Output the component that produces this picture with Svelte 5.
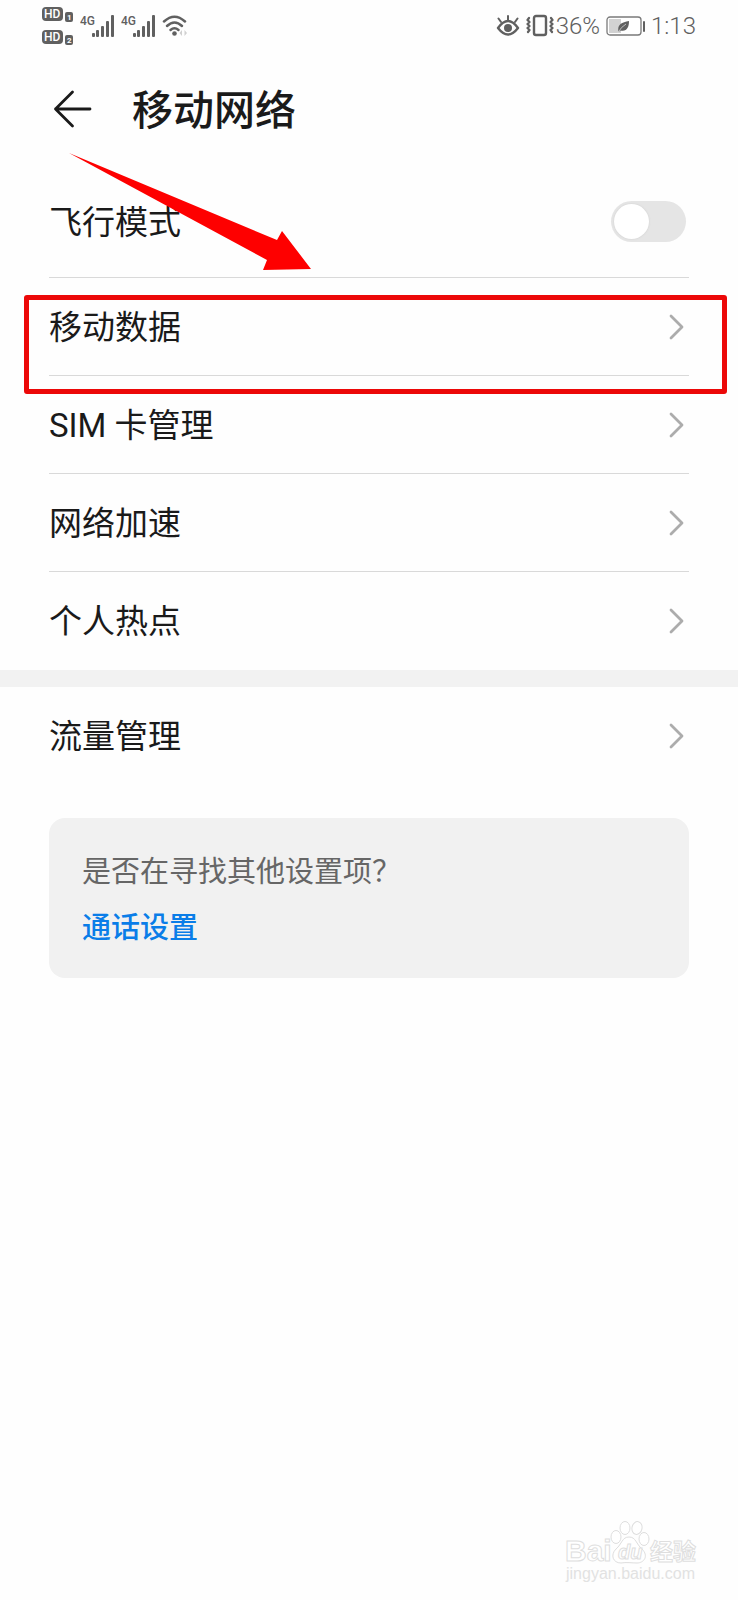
<script>
  let airplane = $state(false);
  const links = ['移动数据', 'SIM 卡管理', '网络加速', '个人热点'];
</script>

{#snippet chevron()}
  <svg class="chevron" width="18" height="28" viewBox="0 0 18 28" aria-hidden="true">
    <path d="M3 3 L14 14 L3 25" fill="none" stroke="#acacac" stroke-width="2.8" stroke-linecap="round" stroke-linejoin="round" />
  </svg>
{/snippet}

{#snippet signal()}
  <svg width="35" height="24" viewBox="0 0 35 24" aria-hidden="true">
    <text class="net" x="0" y="11">4G</text>
    <g fill="#606060">
      <rect x="12" y="19" width="3" height="4" rx="1" />
      <rect x="16" y="16" width="3" height="7" rx="1" />
      <rect x="21" y="12" width="3" height="11" rx="1" />
      <rect x="26" y="7" width="3" height="16" rx="1" />
      <rect x="31" y="1" width="3" height="22" rx="1" />
    </g>
  </svg>
{/snippet}

<div class="page">
  <div class="status">
    <div class="group">
      <svg width="32" height="40" viewBox="0 0 32 40" aria-hidden="true">
        <g fill="#606060">
          <rect x="0" y="1" width="21" height="14" rx="4" />
          <rect x="23" y="6" width="8" height="10" rx="2" />
          <rect x="0" y="24" width="21" height="14" rx="4" />
          <rect x="23" y="29" width="8" height="10" rx="2" />
        </g>
        <text class="hd" x="2" y="12">HD</text>
        <text class="num" x="25" y="14">1</text>
        <text class="hd" x="2" y="35">HD</text>
        <text class="num" x="25" y="37">2</text>
      </svg>
      {@render signal()}
      {@render signal()}
      <svg width="26" height="24" viewBox="0 0 26 24" aria-hidden="true">
        <g fill="none" stroke="#606060" stroke-width="2.5" stroke-linecap="round">
          <path d="M2 7.5 Q12.5 -2 23 7.5" />
          <path d="M5 12 Q12.5 5 20 12" />
          <path d="M8.5 16 Q12.5 12.5 16.5 16" />
        </g>
        <circle cx="12.500" cy="19.500" r="2.300" fill="#606060" />
        <path d="M20 16 L17.500 19 L20 22 Z M22.500 16 L25 19 L22.500 22 Z" fill="#d0d0d0" />
      </svg>
    </div>
    <div class="group">
      <svg width="24" height="24" viewBox="0 0 24 24" aria-hidden="true">
        <g fill="none" stroke="#606060" stroke-width="2.4" stroke-linecap="round">
          <path d="M2 14 Q12 0 22 14 Q12 27 2 14 Z" stroke-linejoin="round" />
          <path d="M12 6 V2 M5 8 L2.500 4.500 M19 8 L21.500 4.500" stroke-width="2" />
        </g>
        <circle cx="12" cy="14" r="4" fill="#606060" />
      </svg>
      <div class="pair">
        <svg width="28" height="24" viewBox="0 0 28 24" aria-hidden="true">
          <rect x="8" y="2" width="12" height="19" rx="2" fill="none" stroke="#606060" stroke-width="2.400" />
          <path d="M3 4 L1.500 6 L3.500 8 L1.500 10 L3.500 12 L1.500 14 L3.500 16 L2 18 M25 4 L26.500 6 L24.500 8 L26.500 10 L24.500 12 L26.500 14 L24.500 16 L26 18" fill="none" stroke="#606060" stroke-width="2.200" stroke-linejoin="round" stroke-linecap="round" />
        </svg>
        <span>36%</span>
      </div>
      <svg width="39" height="22" viewBox="0 0 39 22" aria-hidden="true">
        <rect x="1" y="2" width="34" height="18" rx="3" fill="#fff" stroke="#7a7a7a" stroke-width="1.300" />
        <rect x="3" y="4" width="12" height="14" fill="#d2d2d2" />
        <path d="M12.500 17 C11 9 16 7.500 23 6 C23 12 21 17 14.500 15.500 Z" fill="#606060" />
        <path d="M12 17.500 Q15 12 20 9" fill="none" stroke="#e6e6e6" stroke-width=".7" />
        <rect x="37" y="6" width="2" height="11" rx="1" fill="#606060" />
      </svg>
      <span>1:13</span>
    </div>
  </div>

  <header>
    <button class="back" aria-label="返回">
      <svg width="40" height="40" viewBox="0 0 40 40" aria-hidden="true">
        <path d="M19.500 3 L2.500 20 L19.500 37 M2.500 20 H37" fill="none" stroke="#1a1a1a" stroke-width="2.800" stroke-linecap="round" stroke-linejoin="round" />
      </svg>
    </button>
    <h1>移动网络</h1>
  </header>

  <main>
    <div class="list">
      <label class="row tall">
        <span>飞行模式</span>
        <input type="checkbox" role="switch" bind:checked={airplane} />
      </label>
      {#each links as text, i}
        <button class="row" class:marked={i === 0}>
          <span>{text}</span>
          {@render chevron()}
        </button>
      {/each}
    </div>
    <div class="list second">
      <button class="row">
        <span>流量管理</span>
        {@render chevron()}
      </button>
    </div>
    <section class="card">
      <p>是否在寻找其他设置项？</p>
      <a href="#call">通话设置</a>
    </section>
  </main>

  <svg class="pointer" width="250" height="126" viewBox="0 0 250 126" aria-hidden="true">
    <path d="M1 1 L209 88 L214 79 L243 117 L195 118 L199 108 Z" fill="#fe0000" />
  </svg>

  <footer>
    <svg width="136" height="68" viewBox="0 0 136 68" role="img" aria-label="Baidu 经验">
      <g fill="#fff" stroke="#dedede" stroke-width="1">
        <text class="logo" x="0" y="41">Bai</text>
        <ellipse cx="51" cy="17" rx="5" ry="6.500" />
        <ellipse cx="60" cy="8" rx="5" ry="6.500" />
        <ellipse cx="72" cy="8" rx="5" ry="6.500" transform="rotate(12 72 8)" />
        <ellipse cx="79" cy="19" rx="5" ry="6.500" />
        <path d="M64 17 C71 17 71 24 77 29 C84 36 79 43 72 43 C67 43 61 42 56 43 C48 43 45 35 51 29 C57 24 57 17 64 17 Z" />
        <text class="du" x="53" y="39">du</text>
        <text class="cn" x="85" y="40">经验</text>
      </g>
      <text class="site" x="1" y="59">jingyan.baidu.com</text>
    </svg>
  </footer>
</div>

<style>
  :global(body) {
    margin: 0;
    background: #fefefe;
  }
  .page {
    position: relative;
    display: flex;
    flex-direction: column;
    min-height: 100vh;
    box-sizing: border-box;
    color: #1a1a1a;
    font-family: Roboto, "Noto Sans CJK SC", sans-serif;
  }
  svg {
    display: block;
    flex: none;
  }
  .status {
    display: flex;
    justify-content: space-between;
    align-items: center;
    height: 52px;
    padding: 0 42px;
    color: #606060;
    font-size: 24px;
    font-weight: 300;
  }
  .group {
    display: flex;
    align-items: center;
    gap: 6px;
  }
  .pair {
    display: flex;
    align-items: center;
    gap: 2px;
  }
  .net {
    font: 500 12px Roboto, sans-serif;
    fill: #606060;
  }
  .hd {
    font: 500 12px Roboto, sans-serif;
    fill: #fff;
  }
  .num {
    font: 700 8px Roboto, sans-serif;
    fill: #fff;
  }
  header {
    display: flex;
    align-items: center;
    gap: 39px;
    height: 114px;
    padding: 0 53px;
  }
  button {
    border: 0;
    padding: 0;
    background: none;
    color: inherit;
    font: inherit;
    cursor: pointer;
  }
  h1 {
    margin: 0;
    padding-top: 4px;
    font-size: 41px;
    font-weight: 500;
    line-height: 56px;
  }
  .list {
    padding: 0 49px;
  }
  .row {
    position: relative;
    display: flex;
    align-items: center;
    justify-content: space-between;
    width: 100%;
    min-height: 98px;
    box-sizing: border-box;
    padding-right: 3px;
    border-bottom: 1px solid #d9d9d9;
    font-size: 33px;
    line-height: 48px;
    text-align: left;
  }
  .row span {
    padding-top: 3px;
  }
  .row.tall {
    min-height: 112px;
  }
  .row:last-child {
    border-bottom-color: transparent;
  }
  .second {
    border-top: 17px solid #f2f2f2;
  }
  .marked::after {
    content: "";
    position: absolute;
    inset: 17px -38px -19px -25px;
    border: 5px solid #ec0808;
    border-radius: 3px;
  }
  input {
    appearance: none;
    width: 75px;
    height: 41px;
    box-sizing: border-box;
    margin: 0;
    padding: 3px;
    border-radius: 21px;
    background: #e5e5e5;
  }
  input::before {
    content: "";
    display: block;
    width: 35px;
    height: 35px;
    border-radius: 50%;
    background: #fff;
    box-shadow: 0 0 2px #ccc;
  }
  input:checked {
    background: #0a7de8;
  }
  input:checked::before {
    margin-left: auto;
  }
  .card {
    display: flex;
    flex-direction: column;
    align-items: flex-start;
    margin: 33px 49px;
    padding: 26px 33px 22px;
    border-radius: 16px;
    background: #f1f1f1;
    font-size: 29px;
    line-height: 56px;
  }
  .card p {
    margin: 0;
    color: #666;
  }
  .card a {
    color: #0a7de8;
    font-weight: 500;
    text-decoration: none;
  }
  .pointer {
    position: absolute;
    left: 68px;
    top: 152px;
    pointer-events: none;
  }
  footer {
    display: flex;
    justify-content: flex-end;
    margin-top: auto;
    padding: 0 37px 12px;
  }
  .logo {
    font: 700 30px "Liberation Sans", sans-serif;
  }
  .du {
    font: italic 700 20px "Liberation Sans", sans-serif;
  }
  .cn {
    font: 700 23px "Noto Sans CJK SC", sans-serif;
  }
  .site {
    font: 16px "Liberation Sans", sans-serif;
    fill: #e2e2e2;
  }
</style>
